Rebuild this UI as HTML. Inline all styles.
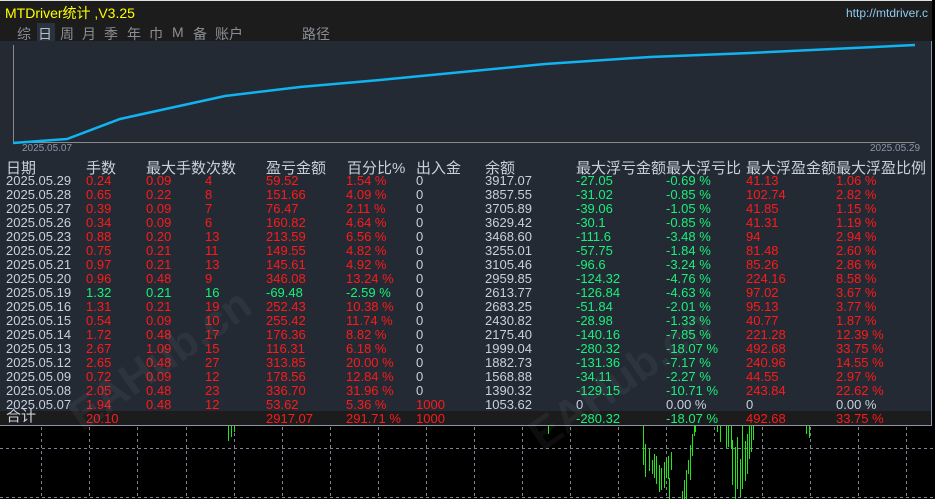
<!DOCTYPE html>
<html><head><meta charset="utf-8"><style>
*{margin:0;padding:0}
body{width:935px;height:499px;background:#000;position:relative;overflow:hidden;font-family:"Liberation Sans","Noto Sans CJK SC",sans-serif}
.a{position:absolute;white-space:nowrap}
#top{position:absolute;left:0;top:0;width:932px;height:41px;background:#1c1c1c;border-top:1px solid #e0e0e0}
#panel{position:absolute;left:0;top:41px;width:931px;height:384px;background:#232a33;border-right:1px solid #8a96a8;border-bottom:1px solid #8a96a8}
.t{color:#8a8f96;font-size:14px;top:24px}
.h{color:#c8d0dc;font-size:15px;top:157px}
.r{position:absolute;left:0;width:931px;height:14px;font-size:13px;line-height:14px}
.r span{position:absolute;top:0}
.w{color:#c8d0dc}.R{color:#ff1a1a}.G{color:#19f07a}
</style></head><body>
<div id="top"></div>
<div class="a" style="left:5px;top:3px;color:#ffff00;font-size:14px">MTDriver统计 ,V3.25</div>
<div class="a" style="left:846px;top:6px;color:#8ecaf2;font-size:12px">http://mtdriver.c</div>
<div class="a" style="left:37px;top:23px;width:18px;height:18px;background:#2a323d"></div>
<div class="a t" style="left:17px">综</div>
<div class="a t" style="left:38px;color:#b8c0c8">日</div>
<div class="a t" style="left:60px">周</div>
<div class="a t" style="left:82px">月</div>
<div class="a t" style="left:104px">季</div>
<div class="a t" style="left:127px">年</div>
<div class="a t" style="left:149px">巾</div>
<div class="a t" style="left:172px">M</div>
<div class="a t" style="left:193px">备</div>
<div class="a t" style="left:215px">账户</div>
<div class="a t" style="left:302px">路径</div>
<div id="panel"></div>
<svg class="a" style="left:0;top:0" width="935" height="499">
<line x1="13.5" y1="45" x2="13.5" y2="143" stroke="#8a8a8a"/>
<line x1="13" y1="142.5" x2="915" y2="142.5" stroke="#8a8a8a"/>
<polyline fill="none" stroke="#10b4f0" stroke-width="2.5" points="13,143 40,141 67,139 120,119 225,96 300,87 380,80 545,64 650,57 750,53 915,45"/>
<g fill="none" stroke="#7a8494" stroke-dasharray="3,3">
<line x1="0" y1="448.5" x2="935" y2="448.5"/><line x1="0" y1="497.5" x2="935" y2="497.5"/>
<line x1="41.5" y1="427" x2="41.5" y2="499"/><line x1="89.5" y1="427" x2="89.5" y2="499"/><line x1="137.5" y1="427" x2="137.5" y2="499"/><line x1="186.5" y1="427" x2="186.5" y2="499"/><line x1="234.5" y1="427" x2="234.5" y2="499"/><line x1="282.5" y1="427" x2="282.5" y2="499"/><line x1="330.5" y1="427" x2="330.5" y2="499"/><line x1="378.5" y1="427" x2="378.5" y2="499"/><line x1="426.5" y1="427" x2="426.5" y2="499"/><line x1="474.5" y1="427" x2="474.5" y2="499"/><line x1="522.5" y1="427" x2="522.5" y2="499"/><line x1="570.5" y1="427" x2="570.5" y2="499"/><line x1="618.5" y1="427" x2="618.5" y2="499"/><line x1="666.5" y1="427" x2="666.5" y2="499"/><line x1="714.5" y1="427" x2="714.5" y2="499"/><line x1="762.5" y1="427" x2="762.5" y2="499"/><line x1="810.5" y1="427" x2="810.5" y2="499"/><line x1="858.5" y1="427" x2="858.5" y2="499"/><line x1="906.5" y1="427" x2="906.5" y2="499"/>
</g>
<g stroke="#22e61a" stroke-width="1">
<line x1="228.5" y1="426" x2="228.5" y2="441"/><line x1="231.5" y1="426" x2="231.5" y2="437"/><line x1="234.5" y1="426" x2="234.5" y2="432"/><line x1="548.5" y1="426" x2="548.5" y2="434"/>
<line x1="643.5" y1="426" x2="643.5" y2="465"/><line x1="645.5" y1="444" x2="645.5" y2="477"/><line x1="649.5" y1="449" x2="649.5" y2="471"/><line x1="652.5" y1="460" x2="652.5" y2="474"/><line x1="654.5" y1="454" x2="654.5" y2="478"/><line x1="656.5" y1="456" x2="656.5" y2="484"/><line x1="659.5" y1="465" x2="659.5" y2="492"/><line x1="661.5" y1="468" x2="661.5" y2="490"/><line x1="664.5" y1="462" x2="664.5" y2="488"/><line x1="666.5" y1="458" x2="666.5" y2="478"/><line x1="668.5" y1="456" x2="668.5" y2="479"/><line x1="669.5" y1="478" x2="669.5" y2="499"/><line x1="671.5" y1="452" x2="671.5" y2="470"/><line x1="682.5" y1="491" x2="682.5" y2="499"/><line x1="684.5" y1="480" x2="684.5" y2="499"/><line x1="686.5" y1="470" x2="686.5" y2="499"/><line x1="688.5" y1="460" x2="688.5" y2="474"/><line x1="690.5" y1="445" x2="690.5" y2="480"/><line x1="692.5" y1="434" x2="692.5" y2="456"/><line x1="694.5" y1="426" x2="694.5" y2="436"/><line x1="695.5" y1="426" x2="695.5" y2="432"/>
<line x1="717.5" y1="426" x2="717.5" y2="432"/><line x1="720.5" y1="426" x2="720.5" y2="442"/><line x1="726.5" y1="426" x2="726.5" y2="448"/><line x1="728.5" y1="426" x2="728.5" y2="447"/><line x1="731.5" y1="426" x2="731.5" y2="449"/><line x1="732.5" y1="440" x2="732.5" y2="485"/><line x1="735.5" y1="447" x2="735.5" y2="499"/><line x1="737.5" y1="437" x2="737.5" y2="489"/><line x1="740.5" y1="459" x2="740.5" y2="497"/><line x1="742.5" y1="425" x2="742.5" y2="489"/><line x1="745.5" y1="441" x2="745.5" y2="481"/><line x1="747.5" y1="434" x2="747.5" y2="474"/><line x1="749.5" y1="425" x2="749.5" y2="459"/><line x1="751.5" y1="426" x2="751.5" y2="452"/><line x1="753.5" y1="426" x2="753.5" y2="440"/><line x1="806.5" y1="426" x2="806.5" y2="434"/><line x1="809.5" y1="426" x2="809.5" y2="438"/>
</g>
</svg>
<div class="a" style="left:22px;top:143px;color:#8a96a8;font-size:10px">2025.05.07</div>
<div class="a" style="left:870px;top:143px;color:#8a96a8;font-size:10px">2025.05.29</div>
<div class="a" style="left:0;top:411px;width:931px;height:14px;background:#1c1c1c"></div>
<div class="a h" style="left:6px">日期</div>
<div class="a h" style="left:86px">手数</div>
<div class="a h" style="left:146px">最大手数次数</div>
<div class="a h" style="left:266px">盈亏金额</div>
<div class="a h" style="left:347px">百分比%</div>
<div class="a h" style="left:416px">出入金</div>
<div class="a h" style="left:485px">余额</div>
<div class="a h" style="left:576px">最大浮亏金额</div>
<div class="a h" style="left:666px">最大浮亏比</div>
<div class="a h" style="left:746px">最大浮盈金额</div>
<div class="a h" style="left:836px">最大浮盈比例</div>
<div id="rows"></div>
<div class="r" style="top:174px"><span class="w" style="left:6px">2025.05.29</span><span class="R" style="left:86px">0.24</span><span class="R" style="left:146px">0.09</span><span class="R" style="left:205px">4</span><span class="R" style="left:266px">59.52</span><span class="R" style="left:346px">1.54 %</span><span class="w" style="left:416px">0</span><span class="w" style="left:485px">3917.07</span><span class="G" style="left:576px">-27.05</span><span class="G" style="left:666px">-0.69 %</span><span class="R" style="left:746px">41.13</span><span class="R" style="left:836px">1.06 %</span></div>
<div class="r" style="top:188px"><span class="w" style="left:6px">2025.05.28</span><span class="R" style="left:86px">0.65</span><span class="R" style="left:146px">0.22</span><span class="R" style="left:205px">8</span><span class="R" style="left:266px">151.66</span><span class="R" style="left:346px">4.09 %</span><span class="w" style="left:416px">0</span><span class="w" style="left:485px">3857.55</span><span class="G" style="left:576px">-31.02</span><span class="G" style="left:666px">-0.85 %</span><span class="R" style="left:746px">102.74</span><span class="R" style="left:836px">2.82 %</span></div>
<div class="r" style="top:202px"><span class="w" style="left:6px">2025.05.27</span><span class="R" style="left:86px">0.39</span><span class="R" style="left:146px">0.09</span><span class="R" style="left:205px">7</span><span class="R" style="left:266px">76.47</span><span class="R" style="left:346px">2.11 %</span><span class="w" style="left:416px">0</span><span class="w" style="left:485px">3705.89</span><span class="G" style="left:576px">-39.06</span><span class="G" style="left:666px">-1.05 %</span><span class="R" style="left:746px">41.85</span><span class="R" style="left:836px">1.15 %</span></div>
<div class="r" style="top:216px"><span class="w" style="left:6px">2025.05.26</span><span class="R" style="left:86px">0.34</span><span class="R" style="left:146px">0.09</span><span class="R" style="left:205px">6</span><span class="R" style="left:266px">160.82</span><span class="R" style="left:346px">4.64 %</span><span class="w" style="left:416px">0</span><span class="w" style="left:485px">3629.42</span><span class="G" style="left:576px">-30.1</span><span class="G" style="left:666px">-0.85 %</span><span class="R" style="left:746px">41.31</span><span class="R" style="left:836px">1.19 %</span></div>
<div class="r" style="top:230px"><span class="w" style="left:6px">2025.05.23</span><span class="R" style="left:86px">0.88</span><span class="R" style="left:146px">0.20</span><span class="R" style="left:205px">13</span><span class="R" style="left:266px">213.59</span><span class="R" style="left:346px">6.56 %</span><span class="w" style="left:416px">0</span><span class="w" style="left:485px">3468.60</span><span class="G" style="left:576px">-111.6</span><span class="G" style="left:666px">-3.48 %</span><span class="R" style="left:746px">94</span><span class="R" style="left:836px">2.94 %</span></div>
<div class="r" style="top:244px"><span class="w" style="left:6px">2025.05.22</span><span class="R" style="left:86px">0.75</span><span class="R" style="left:146px">0.21</span><span class="R" style="left:205px">11</span><span class="R" style="left:266px">149.55</span><span class="R" style="left:346px">4.82 %</span><span class="w" style="left:416px">0</span><span class="w" style="left:485px">3255.01</span><span class="G" style="left:576px">-57.75</span><span class="G" style="left:666px">-1.84 %</span><span class="R" style="left:746px">81.48</span><span class="R" style="left:836px">2.60 %</span></div>
<div class="r" style="top:258px"><span class="w" style="left:6px">2025.05.21</span><span class="R" style="left:86px">0.97</span><span class="R" style="left:146px">0.21</span><span class="R" style="left:205px">13</span><span class="R" style="left:266px">145.61</span><span class="R" style="left:346px">4.92 %</span><span class="w" style="left:416px">0</span><span class="w" style="left:485px">3105.46</span><span class="G" style="left:576px">-96.6</span><span class="G" style="left:666px">-3.24 %</span><span class="R" style="left:746px">85.26</span><span class="R" style="left:836px">2.86 %</span></div>
<div class="r" style="top:272px"><span class="w" style="left:6px">2025.05.20</span><span class="R" style="left:86px">0.96</span><span class="R" style="left:146px">0.48</span><span class="R" style="left:205px">9</span><span class="R" style="left:266px">346.08</span><span class="R" style="left:346px">13.24 %</span><span class="w" style="left:416px">0</span><span class="w" style="left:485px">2959.85</span><span class="G" style="left:576px">-124.32</span><span class="G" style="left:666px">-4.76 %</span><span class="R" style="left:746px">224.16</span><span class="R" style="left:836px">8.58 %</span></div>
<div class="r" style="top:286px"><span class="w" style="left:6px">2025.05.19</span><span class="G" style="left:86px">1.32</span><span class="G" style="left:146px">0.21</span><span class="G" style="left:205px">16</span><span class="G" style="left:266px">-69.48</span><span class="G" style="left:346px">-2.59 %</span><span class="w" style="left:416px">0</span><span class="w" style="left:485px">2613.77</span><span class="G" style="left:576px">-126.84</span><span class="G" style="left:666px">-4.63 %</span><span class="R" style="left:746px">97.02</span><span class="R" style="left:836px">3.67 %</span></div>
<div class="r" style="top:300px"><span class="w" style="left:6px">2025.05.16</span><span class="R" style="left:86px">1.31</span><span class="R" style="left:146px">0.21</span><span class="R" style="left:205px">19</span><span class="R" style="left:266px">252.43</span><span class="R" style="left:346px">10.38 %</span><span class="w" style="left:416px">0</span><span class="w" style="left:485px">2683.25</span><span class="G" style="left:576px">-51.84</span><span class="G" style="left:666px">-2.01 %</span><span class="R" style="left:746px">95.13</span><span class="R" style="left:836px">3.77 %</span></div>
<div class="r" style="top:314px"><span class="w" style="left:6px">2025.05.15</span><span class="R" style="left:86px">0.54</span><span class="R" style="left:146px">0.09</span><span class="R" style="left:205px">10</span><span class="R" style="left:266px">255.42</span><span class="R" style="left:346px">11.74 %</span><span class="w" style="left:416px">0</span><span class="w" style="left:485px">2430.82</span><span class="G" style="left:576px">-28.98</span><span class="G" style="left:666px">-1.33 %</span><span class="R" style="left:746px">40.77</span><span class="R" style="left:836px">1.87 %</span></div>
<div class="r" style="top:328px"><span class="w" style="left:6px">2025.05.14</span><span class="R" style="left:86px">1.72</span><span class="R" style="left:146px">0.48</span><span class="R" style="left:205px">17</span><span class="R" style="left:266px">176.36</span><span class="R" style="left:346px">8.82 %</span><span class="w" style="left:416px">0</span><span class="w" style="left:485px">2175.40</span><span class="G" style="left:576px">-140.16</span><span class="G" style="left:666px">-7.85 %</span><span class="R" style="left:746px">221.28</span><span class="R" style="left:836px">12.39 %</span></div>
<div class="r" style="top:342px"><span class="w" style="left:6px">2025.05.13</span><span class="R" style="left:86px">2.67</span><span class="R" style="left:146px">1.09</span><span class="R" style="left:205px">15</span><span class="R" style="left:266px">116.31</span><span class="R" style="left:346px">6.18 %</span><span class="w" style="left:416px">0</span><span class="w" style="left:485px">1999.04</span><span class="G" style="left:576px">-280.32</span><span class="G" style="left:666px">-18.07 %</span><span class="R" style="left:746px">492.68</span><span class="R" style="left:836px">33.75 %</span></div>
<div class="r" style="top:356px"><span class="w" style="left:6px">2025.05.12</span><span class="R" style="left:86px">2.65</span><span class="R" style="left:146px">0.48</span><span class="R" style="left:205px">27</span><span class="R" style="left:266px">313.85</span><span class="R" style="left:346px">20.00 %</span><span class="w" style="left:416px">0</span><span class="w" style="left:485px">1882.73</span><span class="G" style="left:576px">-131.36</span><span class="G" style="left:666px">-7.17 %</span><span class="R" style="left:746px">240.96</span><span class="R" style="left:836px">14.55 %</span></div>
<div class="r" style="top:370px"><span class="w" style="left:6px">2025.05.09</span><span class="R" style="left:86px">0.72</span><span class="R" style="left:146px">0.09</span><span class="R" style="left:205px">12</span><span class="R" style="left:266px">178.56</span><span class="R" style="left:346px">12.84 %</span><span class="w" style="left:416px">0</span><span class="w" style="left:485px">1568.88</span><span class="G" style="left:576px">-34.11</span><span class="G" style="left:666px">-2.27 %</span><span class="R" style="left:746px">44.55</span><span class="R" style="left:836px">2.97 %</span></div>
<div class="r" style="top:384px"><span class="w" style="left:6px">2025.05.08</span><span class="R" style="left:86px">2.05</span><span class="R" style="left:146px">0.48</span><span class="R" style="left:205px">23</span><span class="R" style="left:266px">336.70</span><span class="R" style="left:346px">31.96 %</span><span class="w" style="left:416px">0</span><span class="w" style="left:485px">1390.32</span><span class="G" style="left:576px">-129.15</span><span class="G" style="left:666px">-10.71 %</span><span class="R" style="left:746px">243.84</span><span class="R" style="left:836px">22.62 %</span></div>
<div class="r" style="top:398px"><span class="w" style="left:6px">2025.05.07</span><span class="R" style="left:86px">1.94</span><span class="R" style="left:146px">0.48</span><span class="R" style="left:205px">12</span><span class="R" style="left:266px">53.62</span><span class="R" style="left:346px">5.36 %</span><span class="R" style="left:416px">1000</span><span class="w" style="left:485px">1053.62</span><span class="w" style="left:576px">0</span><span class="w" style="left:666px">0.00 %</span><span class="w" style="left:746px">0</span><span class="w" style="left:836px">0.00 %</span></div>
<div class="r" style="top:412px"><span class="w" style="left:6px;font-size:15px;top:-2px">合计</span><span class="R" style="left:86px">20.10</span><span class="R" style="left:266px">2917.07</span><span class="R" style="left:346px">291.71 %</span><span class="R" style="left:416px">1000</span><span class="G" style="left:576px">-280.32</span><span class="G" style="left:666px">-18.07 %</span><span class="R" style="left:746px">492.68</span><span class="R" style="left:836px">33.75 %</span></div>
<div class="a" style="left:60px;top:220px;font-size:44px;font-weight:bold;color:rgba(255,255,255,0.05);transform:rotate(-35deg);transform-origin:0 0;top:400px">EAHub.cn</div>
<div class="a" style="left:520px;top:420px;font-size:44px;font-weight:bold;color:rgba(255,255,255,0.05);transform:rotate(-35deg);transform-origin:0 0">EAHub.cn</div>
</body></html>
